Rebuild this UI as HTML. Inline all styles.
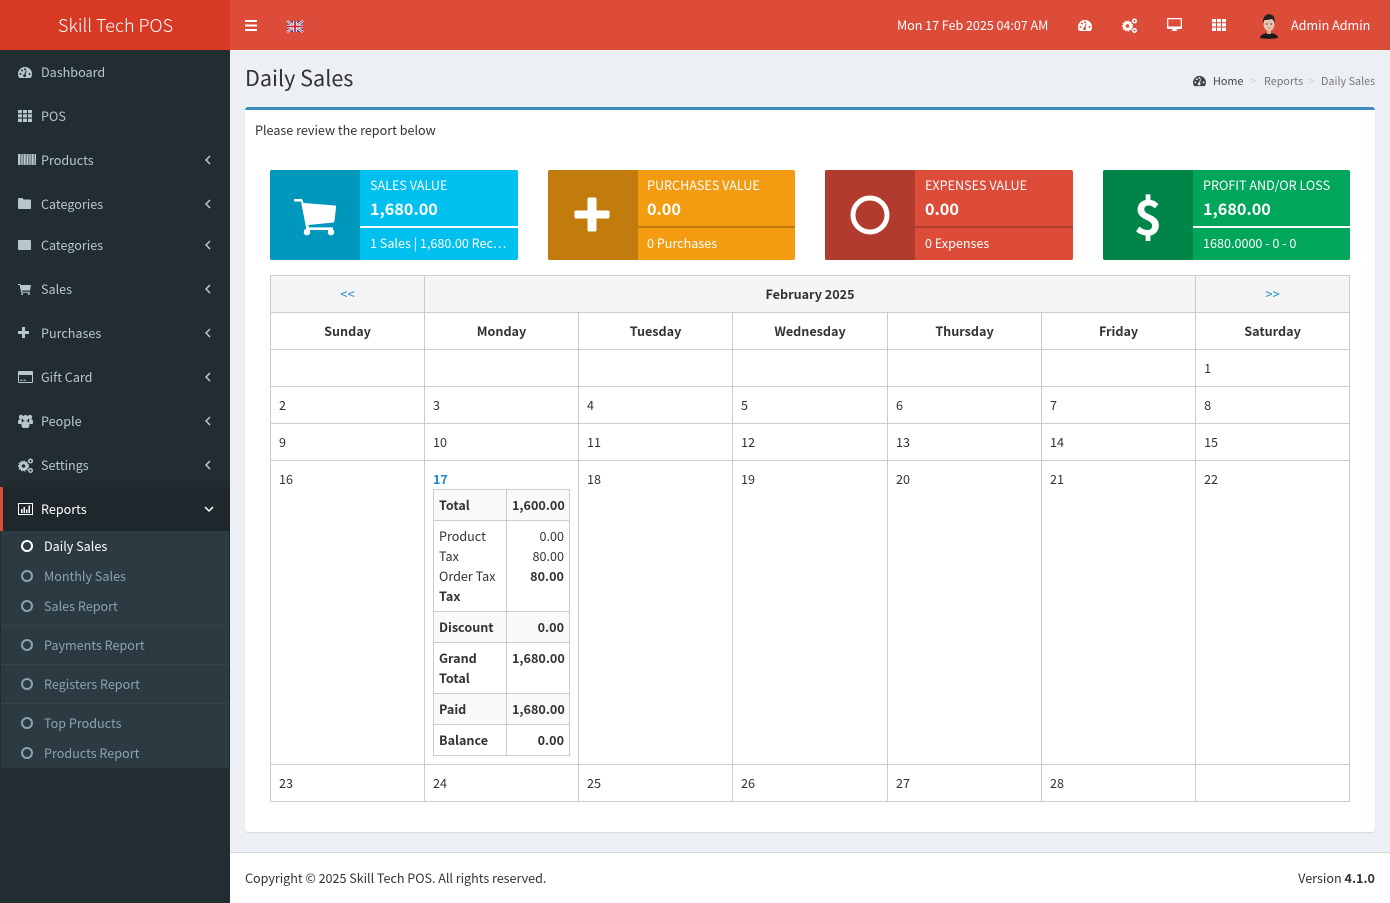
<!DOCTYPE html>
<html><head><meta charset="utf-8"><title>Daily Sales</title>
<style>
*{box-sizing:border-box}
html,body{margin:0;padding:0;width:1390px;height:903px;overflow:hidden;background:#ecf0f5;font-family:"Noto Sans CJK SC","Liberation Sans",sans-serif;font-size:12.6px;color:#333}
.a{position:absolute}
.t{position:absolute;white-space:nowrap;line-height:20px;height:20px}
.side{left:0;top:50px;width:230px;height:853px;background:#222d32}
.nav{color:#b8c7ce}
.sub{color:#8aa4af}
.chev{position:absolute;left:204px;width:8px;height:10px}
svg{display:block;position:absolute;overflow:visible}
.cal{position:absolute;left:270px;top:275px;width:1079px;border-collapse:collapse;table-layout:fixed;color:#333}
.cal>tbody>tr>td{border:1px solid #ccc;padding:8px;vertical-align:top;line-height:20px;height:37px;overflow:visible}
.cal .h{text-align:center;font-weight:700;background:#fff}
.cal .g{background:#f5f5f5}
.in{position:absolute;left:433px;top:489px;width:136px;border-collapse:collapse;table-layout:fixed}
.in td{border:1px solid #ccc;padding:5px;line-height:20px;vertical-align:top}
.in td:last-child{text-align:right}
.in b{font-weight:700}
.in .g td{background:#f9f9f9}
.box{position:absolute;top:170px;height:90px;width:248px;border-radius:2px;color:#fff;overflow:hidden}
.box .ic{position:absolute;left:0;top:0;width:90px;height:90px}
.box .l1{position:absolute;left:100px;top:5px;line-height:20px;white-space:nowrap}
.box .l2{position:absolute;left:100px;top:26px;line-height:24px;font-size:16.2px;font-weight:700;white-space:nowrap}
.box .bar{position:absolute;left:90px;top:56px;right:0;height:2px}
.box .l3{position:absolute;left:100px;top:63px;line-height:20px;white-space:nowrap}
</style></head><body>

<!-- header -->
<div class="a" style="left:0;top:0;width:1390px;height:50px;background:#dd4b39"></div>
<div class="a" style="left:0;top:0;width:230px;height:50px;background:#d73925"></div>
<div class="t" style="left:58px;top:11px;height:28px;line-height:28px;font-size:18px;font-weight:300;color:#fff;width:120px;">Skill Tech POS</div>

<svg style="left:245px;top:20px" width="12" height="11"><path d="M0 0h12v2H0zM0 4.500h12v2H0zM0 9h12v2H0z" fill="#fff"/></svg>
<svg style="left:287px;top:21px" width="16" height="11" viewBox="0 0 16 11"><rect width="16" height="11" fill="#3c4a8e"/><path d="M0 0L16 11M16 0L0 11" stroke="#fff" stroke-width="2.400"/><path d="M0 0L16 11M16 0L0 11" stroke="#c8354a" stroke-width=".8"/><path d="M8 0v11M0 5.500h16" stroke="#fff" stroke-width="3.600"/><path d="M8 0v11M0 5.500h16" stroke="#c8203a" stroke-width="1.800"/></svg>

<div class="t" style="left:897px;top:15px;color:#fff;letter-spacing:-.05px">Mon 17 Feb 2025 04:07 AM</div>

<!-- top icons -->
<svg style="left:1078px;top:19px" width="14" height="13" viewBox="0 0 14 13"><path d="M7 1A7 7 0 0 0 0 8c0 1.500.4 2.700 1.100 3.800.2.200.4.200.6.200h10.600c.2 0 .5 0 .6-.2C13.600 10.700 14 9.500 14 8A7 7 0 0 0 7 1z" fill="#fff"/><circle cx="2.500" cy="8" r="1" fill="#dd4b39"/><circle cx="4" cy="4.500" r="1" fill="#dd4b39"/><circle cx="7" cy="3.200" r="1" fill="#dd4b39"/><circle cx="11.500" cy="8" r="1" fill="#dd4b39"/><path d="M8.800 4.500L7.500 8.500A1.500 1.500 0 1 1 6.300 8.200L8 4.300z" fill="#dd4b39"/></svg>
<svg style="left:1122px;top:18px" width="15" height="15" viewBox="0 0 15 15"><g fill="none" stroke="#fff"><circle cx="5.500" cy="8" r="3.200" stroke-width="2.800"/><circle cx="5.500" cy="8" r="4.800" stroke-width="1.500" stroke-dasharray="1.600 1.200"/><circle cx="12.500" cy="3" r="1.800" stroke-width="1.500"/><circle cx="12.500" cy="12.500" r="1.800" stroke-width="1.500"/></g></svg>
<svg style="left:1167px;top:18px" width="15" height="14" viewBox="0 0 15 14"><path d="M1 0h13a1 1 0 0 1 1 1v9a1 1 0 0 1-1 1H9.500v1.500h1V13h-6v-.5h1V11H1a1 1 0 0 1-1-1V1a1 1 0 0 1 1-1zm.3 1.300v7.200h12.400V1.300z" fill="#fff" fill-rule="evenodd"/></svg>
<svg style="left:1212px;top:19px" width="14" height="12" viewBox="0 0 14 12"><path d="M0 0h4v3.200H0zM5 0h4v3.200H5zM10 0h4v3.200h-4zM0 4.300h4v3.200H0zM5 4.300h4v3.200H5zM10 4.300h4v3.200h-4zM0 8.600h4V12H0zM5 8.600h4V12H5zM10 8.600h4V12h-4z" fill="#fff"/></svg>

<!-- avatar -->
<svg style="left:1259px;top:13px" width="20" height="26" viewBox="0 0 20 26"><path d="M1 25c0-3 4-5 9-5s9 2 9 5c-3 1-15 1-18 0z" fill="#1a1a1a"/><rect x="8" y="16" width="4" height="5" fill="#d9a890"/><ellipse cx="10" cy="11" rx="5.500" ry="7" fill="#e8c4ae"/><path d="M4 11C3 4 7 1 11 1c0 0 1 1 2 1 2 1 3 4 3 9-1-3-2-5-4-5-2 1-5 1-6.500 1C5 8 4.500 9 4 11z" fill="#2a2220"/><circle cx="7.800" cy="11" r=".9" fill="#555"/><circle cx="12.200" cy="11" r=".9" fill="#555"/><path d="M8.500 15h3" stroke="#b0705f" stroke-width=".7"/></svg>
<div class="t" style="left:1291px;top:15px;color:#fff">Admin Admin</div>

<!-- sidebar -->
<div class="a side"></div>
<div class="a" style="left:0;top:487px;width:230px;height:44px;background:#1e282c"></div>
<div class="a" style="left:0;top:487px;width:3px;height:44px;background:#dd4b39"></div>
<div class="a" style="left:1px;top:531px;width:228px;height:237px;background:#2c3b41"></div>
<div class="a" style="left:1px;top:625px;width:228px;height:1px;background:#34444b"></div>
<div class="a" style="left:1px;top:664px;width:228px;height:1px;background:#34444b"></div>
<div class="a" style="left:1px;top:703px;width:228px;height:1px;background:#34444b"></div>

<div class="t nav" style="left:41px;top:62px">Dashboard</div>
<div class="t nav" style="left:41px;top:106px">POS</div>
<div class="t nav" style="left:41px;top:150px">Products</div>
<div class="t nav" style="left:41px;top:194px">Categories</div>
<div class="t nav" style="left:41px;top:235px">Categories</div>
<div class="t nav" style="left:41px;top:279px">Sales</div>
<div class="t nav" style="left:41px;top:323px">Purchases</div>
<div class="t nav" style="left:41px;top:367px">Gift Card</div>
<div class="t nav" style="left:41px;top:411px">People</div>
<div class="t nav" style="left:41px;top:455px">Settings</div>
<div class="t" style="left:41px;top:499px;color:#fff">Reports</div>

<!-- side icons -->
<svg style="left:18px;top:66px" width="14" height="13" viewBox="0 0 14 13"><path d="M7 1A7 7 0 0 0 0 8c0 1.500.4 2.700 1.100 3.800.2.200.4.200.6.200h10.600c.2 0 .5 0 .6-.2C13.600 10.700 14 9.500 14 8A7 7 0 0 0 7 1z" fill="#b8c7ce"/><circle cx="2.500" cy="8" r="1" fill="#222d32"/><circle cx="4" cy="4.500" r="1" fill="#222d32"/><circle cx="7" cy="3.200" r="1" fill="#222d32"/><circle cx="11.500" cy="8" r="1" fill="#222d32"/><path d="M8.800 4.500L7.500 8.500A1.500 1.500 0 1 1 6.300 8.200L8 4.300z" fill="#222d32"/></svg>
<svg style="left:18px;top:110px" width="14" height="12" viewBox="0 0 14 12"><path d="M0 0h4v3.200H0zM5 0h4v3.200H5zM10 0h4v3.200h-4zM0 4.300h4v3.200H0zM5 4.300h4v3.200H5zM10 4.300h4v3.200h-4zM0 8.600h4V12H0zM5 8.600h4V12H5zM10 8.600h4V12h-4z" fill="#b8c7ce"/></svg>
<svg style="left:18px;top:154px" width="18" height="11" viewBox="0 0 18 11"><rect width="18" height="11" fill="#b8c7ce" opacity=".55"/><path d="M0 0h2v11H0zM3.500 0h1v11h-1zM6 0h1.500v11H6zM9 0h1v11H9zM11.500 0h1v11h-1zM14 0h1.500v11H14zM17 0h1v11h-1z" fill="#b8c7ce"/></svg>
<svg style="left:18px;top:198px" width="13" height="11" viewBox="0 0 13 11"><path d="M1 0h3.500l1.200 1.500H12a1 1 0 0 1 1 1V10a1 1 0 0 1-1 1H1a1 1 0 0 1-1-1V1a1 1 0 0 1 1-1z" fill="#b8c7ce"/></svg>
<svg style="left:18px;top:240px" width="13" height="10" viewBox="0 0 13 10"><rect width="13" height="10" rx="1" fill="#b8c7ce"/></svg>
<svg style="left:18px;top:284px" width="13" height="11" viewBox="0 0 13 11"><path d="M0 0h2.300l.4 1H13l-1 5.500H3.800l.3 1.200H12v1H3.200L1.600 1H0z" fill="#b8c7ce"/><circle cx="4.200" cy="10" r="1" fill="#b8c7ce"/><circle cx="10.800" cy="10" r="1" fill="#b8c7ce"/></svg>
<svg style="left:18px;top:327px" width="11" height="11" viewBox="0 0 11 11"><path d="M4 0h3v4h4v3H7v4H4V7H0V4h4z" fill="#b8c7ce"/></svg>
<svg style="left:18px;top:371px" width="15" height="12" viewBox="0 0 15 12"><path d="M1 0h13a1 1 0 0 1 1 1v10a1 1 0 0 1-1 1H1a1 1 0 0 1-1-1V1a1 1 0 0 1 1-1zm0 4v7h13V4zM2 8.700h2.500v1H2zm3.500 0h2.500v1H5.500z" fill="#b8c7ce" fill-rule="evenodd"/></svg>
<svg style="left:18px;top:414px" width="15" height="14" viewBox="0 0 15 14"><circle cx="3" cy="3" r="2.200" fill="#b8c7ce"/><circle cx="12" cy="3" r="2.200" fill="#b8c7ce"/><circle cx="7.500" cy="4" r="3" fill="#b8c7ce"/><path d="M0 8c0-2 1-3 3-3 .8 0 .6 2 1 3l-.4 2H1C.4 10 0 9.600 0 9zM15 8c0-2-1-3-3-3-.8 0-.6 2-1 3l.4 2H14c.6 0 1-.4 1-1zM3.500 11c0-2.500 1.500-4 4-4s4 1.500 4 4c0 1.800-1 3-2 3h-4c-1 0-2-1.200-2-3z" fill="#b8c7ce"/></svg>
<svg style="left:18px;top:458px" width="15" height="15" viewBox="0 0 15 15"><g fill="none" stroke="#b8c7ce"><circle cx="5.500" cy="8" r="3.200" stroke-width="2.800"/><circle cx="5.500" cy="8" r="4.800" stroke-width="1.500" stroke-dasharray="1.600 1.200"/><circle cx="12.500" cy="3" r="1.800" stroke-width="1.500"/><circle cx="12.500" cy="12.500" r="1.800" stroke-width="1.500"/></g></svg>
<svg style="left:18px;top:503px" width="15" height="12" viewBox="0 0 15 12"><path d="M.5.500h14v11H.5z" fill="none" stroke="#fff"/><path d="M3 6h1.500v4H3zM5.500 4H7v6H5.500zM8 6.500h1.500V10H8zM10.500 2.500H12V10h-1.500z" fill="#fff"/></svg>

<svg class="chev" style="top:155px" viewBox="0 0 8 10"><path d="M6 1L2 5l4 4" fill="none" stroke="#b8c7ce" stroke-width="1.500"/></svg>
<svg class="chev" style="top:199px" viewBox="0 0 8 10"><path d="M6 1L2 5l4 4" fill="none" stroke="#b8c7ce" stroke-width="1.500"/></svg>
<svg class="chev" style="top:240px" viewBox="0 0 8 10"><path d="M6 1L2 5l4 4" fill="none" stroke="#b8c7ce" stroke-width="1.500"/></svg>
<svg class="chev" style="top:284px" viewBox="0 0 8 10"><path d="M6 1L2 5l4 4" fill="none" stroke="#b8c7ce" stroke-width="1.500"/></svg>
<svg class="chev" style="top:328px" viewBox="0 0 8 10"><path d="M6 1L2 5l4 4" fill="none" stroke="#b8c7ce" stroke-width="1.500"/></svg>
<svg class="chev" style="top:372px" viewBox="0 0 8 10"><path d="M6 1L2 5l4 4" fill="none" stroke="#b8c7ce" stroke-width="1.500"/></svg>
<svg class="chev" style="top:416px" viewBox="0 0 8 10"><path d="M6 1L2 5l4 4" fill="none" stroke="#b8c7ce" stroke-width="1.500"/></svg>
<svg class="chev" style="top:460px" viewBox="0 0 8 10"><path d="M6 1L2 5l4 4" fill="none" stroke="#b8c7ce" stroke-width="1.500"/></svg>
<svg style="left:204px;top:505px" width="10" height="8" viewBox="0 0 10 8"><path d="M1 2l4 4 4-4" fill="none" stroke="#fff" stroke-width="1.500"/></svg>

<!-- submenu -->
<svg style="left:21px;top:540px" width="12" height="12"><circle cx="6" cy="6" r="5" fill="none" stroke="#fff" stroke-width="2"/></svg>
<svg style="left:21px;top:570px" width="12" height="12"><circle cx="6" cy="6" r="5" fill="none" stroke="#8aa4af" stroke-width="2"/></svg>
<svg style="left:21px;top:600px" width="12" height="12"><circle cx="6" cy="6" r="5" fill="none" stroke="#8aa4af" stroke-width="2"/></svg>
<svg style="left:21px;top:639px" width="12" height="12"><circle cx="6" cy="6" r="5" fill="none" stroke="#8aa4af" stroke-width="2"/></svg>
<svg style="left:21px;top:678px" width="12" height="12"><circle cx="6" cy="6" r="5" fill="none" stroke="#8aa4af" stroke-width="2"/></svg>
<svg style="left:21px;top:717px" width="12" height="12"><circle cx="6" cy="6" r="5" fill="none" stroke="#8aa4af" stroke-width="2"/></svg>
<svg style="left:21px;top:747px" width="12" height="12"><circle cx="6" cy="6" r="5" fill="none" stroke="#8aa4af" stroke-width="2"/></svg>
<div class="t" style="left:44px;top:536px;color:#fff">Daily Sales</div>
<div class="t sub" style="left:44px;top:566px">Monthly Sales</div>
<div class="t sub" style="left:44px;top:596px">Sales Report</div>
<div class="t sub" style="left:44px;top:635px">Payments Report</div>
<div class="t sub" style="left:44px;top:674px">Registers Report</div>
<div class="t sub" style="left:44px;top:713px">Top Products</div>
<div class="t sub" style="left:44px;top:743px">Products Report</div>

<!-- content header -->
<div class="t" style="left:245px;top:62px;font-size:21.6px;height:32px;line-height:32px">Daily Sales</div>
<svg style="left:1193px;top:75px" width="13" height="12" viewBox="0 0 14 13"><path d="M7 1A7 7 0 0 0 0 8c0 1.500.4 2.700 1.100 3.800.2.200.4.200.6.200h10.600c.2 0 .5 0 .6-.2C13.600 10.700 14 9.500 14 8A7 7 0 0 0 7 1z" fill="#444"/><circle cx="2.500" cy="8" r="1" fill="#ecf0f5"/><circle cx="4" cy="4.500" r="1" fill="#ecf0f5"/><circle cx="7" cy="3.200" r="1" fill="#ecf0f5"/><circle cx="11.500" cy="8" r="1" fill="#ecf0f5"/><path d="M8.800 4.500L7.500 8.500A1.500 1.500 0 1 1 6.300 8.200L8 4.300z" fill="#ecf0f5"/></svg>
<div class="t" style="left:1213px;top:71px;font-size:10.8px;color:#444">Home</div>
<div class="t" style="left:1250px;top:71px;font-size:10.8px;color:#ccc">&gt;</div>
<div class="t" style="left:1264px;top:71px;font-size:10.8px;color:#777">Reports</div>
<div class="t" style="left:1308px;top:71px;font-size:10.8px;color:#ccc">&gt;</div>
<div class="t" style="left:1321px;top:71px;font-size:10.8px;color:#777">Daily Sales</div>

<!-- main box -->
<div class="a" style="left:245px;top:107px;width:1130px;height:725px;background:#fff;border-top:3px solid #3c8dbc;border-radius:3px;box-shadow:0 1px 1px rgba(0,0,0,.1)"></div>
<div class="t" style="left:255px;top:120px">Please review the report below</div>

<!-- stat boxes -->
<div class="box" style="left:270px;background:#00c0ef">
  <div class="ic" style="background:#0097bc"></div>
  <svg style="left:23px;top:28px" width="44" height="38" viewBox="0 0 44 38"><path d="M1 1h8l1.500 4L42 7.500c.8 0 1.200.5 1.100 1.300L41.500 23l-.9 1.500L15.500 27l.4 2.400H40v2.600H13.500L8 3.500H1z" fill="#fff"/><circle cx="14" cy="34" r="3.300" fill="#fff"/><circle cx="38" cy="34" r="3.300" fill="#fff"/></svg>
  <div class="l1">SALES VALUE</div>
  <div class="l2">1,680.00</div>
  <div class="bar" style="background:#fff"></div>
  <div class="l3">1 Sales | 1,680.00 Rec…</div>
</div>
<div class="box" style="left:548px;width:247px;background:#f39c12">
  <div class="ic" style="background:#c27c0e"></div>
  <svg style="left:26px;top:26px" width="36" height="36" viewBox="0 0 36 36"><path d="M15 1.500h6a1.500 1.500 0 0 1 1.500 1.500v11.500H34a1.500 1.500 0 0 1 1.500 1.500v5a1.500 1.500 0 0 1-1.500 1.500H22.500V34a1.500 1.500 0 0 1-1.500 1.500h-6a1.500 1.500 0 0 1-1.500-1.500V22.500H2A1.500 1.500 0 0 1 .5 21v-5A1.500 1.500 0 0 1 2 14.500h11.500V3A1.500 1.500 0 0 1 15 1.500z" fill="#fff"/></svg>
  <div class="l1" style="left:99px">PURCHASES VALUE</div>
  <div class="l2" style="left:99px">0.00</div>
  <div class="bar" style="background:#c27c0e"></div>
  <div class="l3" style="left:99px">0 Purchases</div>
</div>
<div class="box" style="left:825px;background:#dd4b39">
  <div class="ic" style="background:#b13c2e"></div>
  <svg style="left:25px;top:25px" width="40" height="40"><circle cx="20" cy="20" r="17" fill="none" stroke="#fff" stroke-width="5"/></svg>
  <div class="l1">EXPENSES VALUE</div>
  <div class="l2">0.00</div>
  <div class="bar" style="background:#b13c2e"></div>
  <div class="l3">0 Expenses</div>
</div>
<div class="box" style="left:1103px;width:247px;background:#00a65a">
  <div class="ic" style="background:#008548"></div>
  <div class="a" style="left:0;top:14px;width:90px;height:60px;line-height:60px;text-align:center;font-size:48px;font-weight:700;color:#fff">$</div>
  <div class="l1">PROFIT AND/OR LOSS</div>
  <div class="l2">1,680.00</div>
  <div class="bar" style="background:#fff"></div>
  <div class="l3">1680.0000 - 0 - 0</div>
</div>

<!-- calendar -->
<table class="cal">
<colgroup><col style="width:154px"><col style="width:154px"><col style="width:154px"><col style="width:155px"><col style="width:154px"><col style="width:154px"><col style="width:154px"></colgroup>
<tbody>
<tr><td class="g" style="text-align:center;color:#1c88c7;font-size:13px">&lt;&lt;</td><td class="g" colspan="5" style="text-align:center;font-weight:700">February 2025</td><td class="g" style="text-align:center;color:#1c88c7;font-size:13px">&gt;&gt;</td></tr>
<tr><td class="h">Sunday</td><td class="h">Monday</td><td class="h">Tuesday</td><td class="h">Wednesday</td><td class="h">Thursday</td><td class="h">Friday</td><td class="h">Saturday</td></tr>
<tr><td></td><td></td><td></td><td></td><td></td><td></td><td>1</td></tr>
<tr><td>2</td><td>3</td><td>4</td><td>5</td><td>6</td><td>7</td><td>8</td></tr>
<tr><td>9</td><td>10</td><td>11</td><td>12</td><td>13</td><td>14</td><td>15</td></tr>
<tr style="height:304px"><td>16</td><td style="color:#1c88c7;font-weight:700">17</td><td>18</td><td>19</td><td>20</td><td>21</td><td>22</td></tr>
<tr><td>23</td><td>24</td><td>25</td><td>26</td><td>27</td><td>28</td><td></td></tr>
</tbody></table>

<table class="in">
<colgroup><col style="width:73px"><col style="width:63px"></colgroup>
<tr class="g"><td><b>Total</b></td><td><b>1,600.00</b></td></tr>
<tr><td style="white-space:nowrap">Product<br>Tax<br>Order Tax<br><b>Tax</b></td><td>0.00<br>80.00<br><b>80.00</b></td></tr>
<tr class="g"><td><b>Discount</b></td><td><b>0.00</b></td></tr>
<tr><td><b>Grand<br>Total</b></td><td><b>1,680.00</b></td></tr>
<tr class="g"><td><b>Paid</b></td><td><b>1,680.00</b></td></tr>
<tr><td><b>Balance</b></td><td><b>0.00</b></td></tr>
</table>

<!-- footer -->
<div class="a" style="left:230px;top:852px;width:1160px;height:51px;background:#fff;border-top:1px solid #d2d6de"></div>
<div class="t" style="left:245px;top:868px;letter-spacing:-.03px">Copyright © 2025 Skill Tech POS. All rights reserved.</div>
<div class="t" style="right:15px;top:868px">Version <b>4.1.0</b></div>
</body></html>
